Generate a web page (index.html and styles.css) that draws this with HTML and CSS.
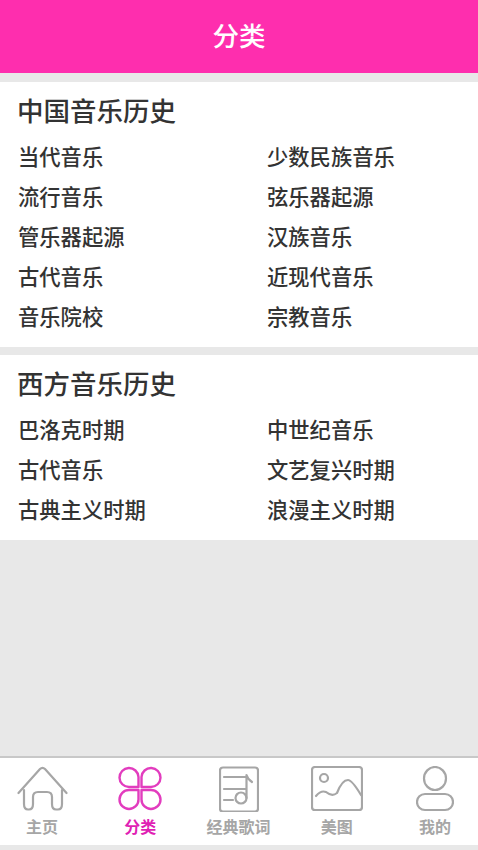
FILE: index.html
```html
<!DOCTYPE html>
<html lang="zh-CN">
<head>
  <meta charset="UTF-8">
  <title>分类</title>
  <link rel="stylesheet" href="styles.css">
</head>
<body>
<div class="page">
  <div class="header">分类</div>
  <div class="main">
    <div class="section">
      <h2>中国音乐历史</h2>
      <ul class="list">
        <li>当代音乐</li>
        <li>少数民族音乐</li>
        <li>流行音乐</li>
        <li>弦乐器起源</li>
        <li>管乐器起源</li>
        <li>汉族音乐</li>
        <li>古代音乐</li>
        <li>近现代音乐</li>
        <li>音乐院校</li>
        <li>宗教音乐</li>
      </ul>
    </div>
    <div class="section">
      <h2>西方音乐历史</h2>
      <ul class="list">
        <li>巴洛克时期</li>
        <li>中世纪音乐</li>
        <li>古代音乐</li>
        <li>文艺复兴时期</li>
        <li>古典主义时期</li>
        <li>浪漫主义时期</li>
      </ul>
    </div>
  </div>
  <div class="tabbar">
    <div class="tab">
      <svg width="51" height="46" viewBox="0 0 51 46" fill="none" stroke="#a6a6a6" stroke-width="2.2" stroke-linecap="round" stroke-linejoin="round">
        <path d="M1.500 27L23 3Q25.500 0.500 28 3L49.500 27"/>
        <path d="M7 24V38Q7 43.500 11 43.500H12Q16 43.500 16 38V31Q16 26 21 26H30Q35 26 35 31V38Q35 43.500 39 43.500H41Q45 43.500 45 38V24"/>
      </svg>
      <span>主页</span>
    </div>
    <div class="tab active">
      <svg width="44" height="46" viewBox="0 0 44 46" fill="none" stroke="#e23cbe" stroke-width="2.4" stroke-linejoin="round">
        <path d="M20.500 21H11A9.500 9.500 0 1 1 20.500 11Z"/>
        <path d="M23.500 21H33A9.500 9.500 0 1 0 23.500 11Z"/>
        <path d="M20.500 24H11A9.500 9.500 0 1 0 20.500 33.500Z"/>
        <path d="M23.500 24H33A9.500 9.500 0 1 1 23.500 33.500Z"/>
      </svg>
      <span>分类</span>
    </div>
    <div class="tab">
      <svg width="40" height="46" viewBox="0 0 40 46" fill="none" stroke="#a6a6a6" stroke-width="2.2" stroke-linecap="round" stroke-linejoin="round">
        <rect x="1" y="1.500" width="38" height="44" rx="3"/>
        <path d="M5 11H27M5 23H27M5 34H14"/>
        <circle cx="22" cy="32" r="5.500"/>
        <path d="M27.500 32V9Q28.500 13 33 16"/>
      </svg>
      <span>经典歌词</span>
    </div>
    <div class="tab">
      <svg width="52" height="46" viewBox="0 0 52 46" fill="none" stroke="#a6a6a6" stroke-width="2.2" stroke-linecap="round" stroke-linejoin="round">
        <rect x="1" y="1" width="50" height="43" rx="3"/>
        <circle cx="13" cy="12" r="4"/>
        <path d="M5 30Q10 24 15 26Q21 31 26 27Q31 14 37 14Q41 14 50 29"/>
      </svg>
      <span>美图</span>
    </div>
    <div class="tab">
      <svg width="38" height="46" viewBox="0 0 38 46" fill="none" stroke="#a6a6a6" stroke-width="2.2">
        <ellipse cx="19" cy="12.500" rx="11" ry="11.500"/>
        <rect x="1" y="28" width="36" height="16" rx="8"/>
      </svg>
      <span>我的</span>
    </div>
  </div>
</div>
</body>
</html>
```

FILE: styles.css
```css
html,body,div,h2,ul,li{margin:0;padding:0;}
ul{list-style-type:none;}
body{background:#e8e8e8;font-family:"Noto Sans CJK SC","Liberation Sans",sans-serif;}
.page{display:flex;flex-direction:column;width:478px;height:850px;overflow:hidden;}
.header{height:73px;flex:none;background:#fe2eae;color:#fff;font-size:26.500px;font-weight:500;line-height:69px;text-align:center;}
.main{flex:1;padding-top:9px;}
.section{background:#fff;padding:8px 18px 11px;margin-bottom:8px;}
.section h2{font-size:26.500px;font-weight:500;line-height:40px;color:#333;margin-left:-1px;}
.list{display:grid;grid-template-columns:249px 1fr;margin-top:6px;}
.list li{font-size:21.300px;font-weight:500;line-height:40px;color:#333;}
.tabbar{height:89px;flex:none;box-sizing:border-box;display:flex;gap:14.250px;background:#fff;border-top:2px solid #c8c8c8;margin-bottom:5px;padding-top:8px;}
.tab{display:flex;flex-direction:column;align-items:center;width:84px;color:#a6a6a6;font-size:16px;font-weight:700;line-height:22px;}
.tab svg{margin-bottom:3px;}
.tab.active{color:#e01fb4;}
```
